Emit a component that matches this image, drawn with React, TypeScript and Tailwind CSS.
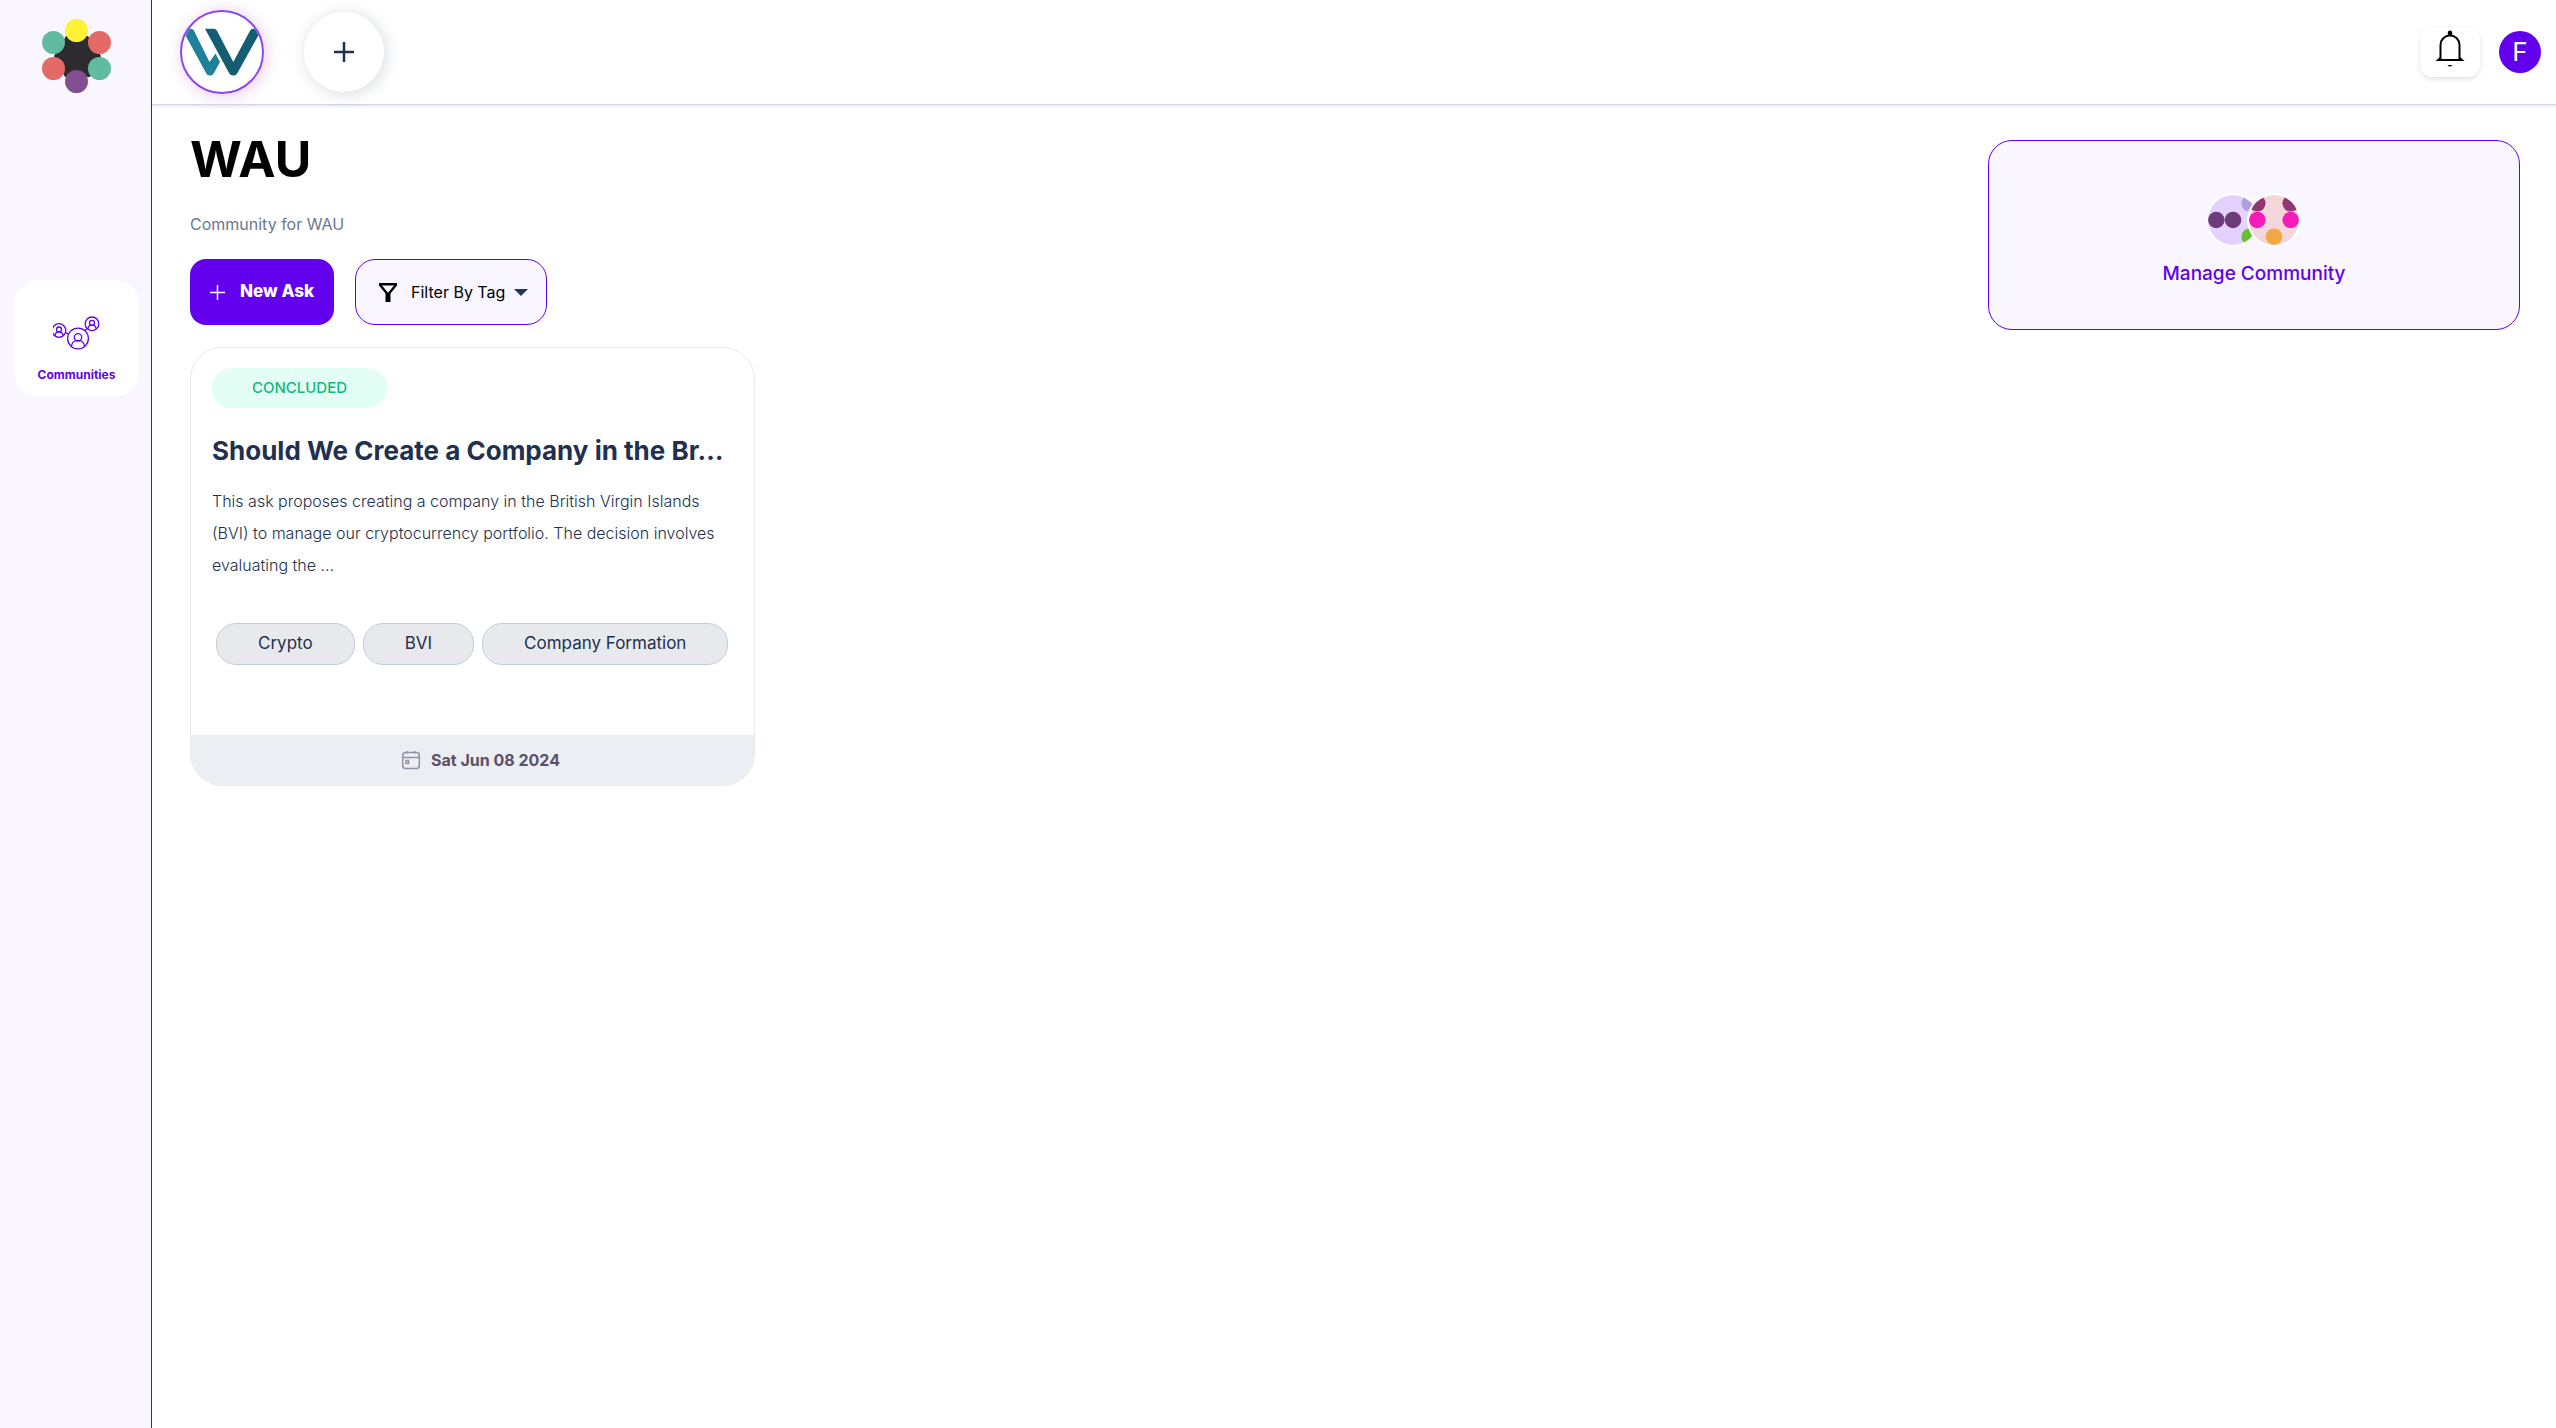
const tags = ['Crypto', 'BVI', 'Company Formation'];

function AppLogo() {
  return (
    <svg viewBox="0 0 70 75" className="h-[75px] w-[70px]" aria-hidden="true">
      <path d="M24 17h22l13 20-11 21H23L12 37z" fill="#2d2b30" />
      <circle cx="11.5" cy="23.5" r="11.5" fill="#61bba0" />
      <circle cx="57.5" cy="23.5" r="11.5" fill="#e46a67" />
      <circle cx="11.5" cy="49.5" r="11.5" fill="#e46a67" />
      <circle cx="57.5" cy="49.5" r="11.5" fill="#61bba0" />
      <circle cx="34.5" cy="11.5" r="11.5" fill="#fff135" />
      <circle cx="34.5" cy="62.5" r="11.5" fill="#834e90" />
    </svg>
  );
}

function CommunitiesIcon() {
  return (
    <svg viewBox="0 0 48 34" className="h-[34px] w-12" fill="none" stroke="#6200ee" strokeWidth="1.3" aria-hidden="true">
      <circle cx="25" cy="22.5" r="10.4" />
      <circle cx="25" cy="21.3" r="3.7" />
      <path d="M18.3 30.4c.6-4 3.2-6 6.7-6s6.1 2 6.7 6" />
      <circle cx="6" cy="14.5" r="6.8" />
      <circle cx="6" cy="13.5" r="2.5" />
      <path d="M1.8 19.7c.4-2.6 2-3.9 4.2-3.9s3.8 1.3 4.2 3.9" />
      <circle cx="39" cy="7.8" r="6.8" />
      <circle cx="39" cy="6.8" r="2.5" />
      <path d="M34.8 13c.4-2.6 2-3.9 4.2-3.9s3.8 1.3 4.2 3.9" />
      <path d="M12.5 16.8l3 1M32 14.500l2-1.800" />
    </svg>
  );
}

function WauLogo() {
  return (
    <svg viewBox="0 0 80 80" className="h-20 w-20 shrink-0" aria-hidden="true">
      <path d="M0 16.7h9q2 0 3 2L27.5 50l6-8.5L38 50l-5.5 10q-1.5 3.5-4.5 3.5T23.5 60L0 17z" fill="#1f8099" />
      <path d="M23 16.7h9q2 0 3 2L51.3 50 68 18.7q1-2 3-2h9L56 60q-1.5 3.5-4.7 3.5T46.5 60z" fill="#145d73" />
    </svg>
  );
}

function BellIcon() {
  return (
    <svg viewBox="0 0 30 38" className="h-[38px] w-[30px]" aria-hidden="true">
      <path d="M5.5 30V15a9.5 9.5 0 0 1 19 0v15" fill="none" stroke="#000" strokeWidth="2" />
      <path d="M12.8 6V2.5q0-2 2.2-2t2.200 2V6z" />
      <path d="M.5 31l4.5-4v2h20v-2l4.5 4z" />
      <path d="M12.5 35h5q-2.5 3-5 0z" />
    </svg>
  );
}

function FilterIcon() {
  return (
    <svg viewBox="0 0 18 19" className="h-[19px] w-[18px]" aria-hidden="true">
      <path fillRule="evenodd" d="M0 0h18v2.5l-6.5 8V19h-5v-8.5L0 2.5zM3 2.5l6 7.3 6-7.3z" />
    </svg>
  );
}

function CalendarIcon() {
  return (
    <svg viewBox="0 0 20 20" className="h-5 w-5" fill="none" stroke="#978fa3" strokeWidth="1.5" aria-hidden="true">
      <rect x="1.7" y="2.5" width="16.6" height="16" rx="3" />
      <path d="M1.7 7.5h16.6M6 1v2.5M14 1v2.5" />
      <rect x="5" y="10.5" width="2.5" height="3" />
    </svg>
  );
}

function Avatars() {
  return (
    <svg viewBox="0 0 96 54" className="h-[54px] w-24" aria-hidden="true">
      <defs>
        <clipPath id="left"><circle cx="27" cy="27" r="25" /></clipPath>
        <clipPath id="right"><circle cx="68" cy="27" r="25" /></clipPath>
      </defs>
      <circle cx="27" cy="27" r="27" fill="#fff" />
      <g clipPath="url(#left)">
        <rect width="54" height="54" fill="#e3d2ff" />
        <circle cx="10.3" cy="27" r="8.3" fill="#6d3b7a" />
        <circle cx="27" cy="27" r="8.3" fill="#6d3b7a" />
        <circle cx="43.7" cy="10.3" r="8.3" fill="#af9fe3" />
        <circle cx="43.7" cy="43.7" r="8.3" fill="#69bd36" />
      </g>
      <circle cx="68" cy="27" r="27" fill="#fff" />
      <g clipPath="url(#right)">
        <rect x="41" width="54" height="54" fill="#f3d7da" />
        <circle cx="51.3" cy="10.3" r="8.3" fill="#943674" />
        <circle cx="84.7" cy="10.3" r="8.3" fill="#943674" />
        <circle cx="51.3" cy="27" r="8.3" fill="#f81bb9" />
        <circle cx="84.7" cy="27" r="8.3" fill="#f81bb9" />
        <circle cx="68" cy="43.7" r="8.3" fill="#f3a745" />
      </g>
    </svg>
  );
}

export default function App() {
  return (
    <div className="flex min-h-screen bg-white font-[Inter,sans-serif] text-[#22304f]">
      {/* Sidebar */}
      <aside className="flex w-[152px] shrink-0 flex-col items-center border-r border-[#6200ee] bg-[#f9f6ff] pt-[19px] pl-0.5">
        <a href="#home" aria-label="Home">
          <AppLogo />
        </a>
        <nav className="mt-[186px]">
          <a
            href="#communities"
            className="flex h-[116px] w-[125px] flex-col items-center rounded-3xl bg-white pt-9"
          >
            <CommunitiesIcon />
            <span className="mt-[17px] text-xs leading-4 font-bold text-[#6200ee]">Communities</span>
          </a>
        </nav>
      </aside>

      <div className="flex min-w-0 flex-1 flex-col">
        {/* Top bar */}
        <header className="flex h-[105px] items-center justify-between border-b border-[#d8d7ea] pr-[15px] pl-7 shadow-[0_1px_3px_rgba(34,48,79,0.15)]">
          <div className="flex items-center gap-10">
            <button
              type="button"
              aria-label="WAU community"
              className="flex h-[84px] w-[84px] items-center justify-center overflow-hidden rounded-full border-2 border-[#8b45f2] shadow-[2px_2px_16px_rgba(160,40,160,0.25)]"
            >
              <WauLogo />
            </button>
            <button
              type="button"
              aria-label="Add community"
              className="flex h-20 w-20 items-center justify-center rounded-full bg-white shadow-[2px_2px_16px_rgba(34,48,79,0.18)]"
            >
              <svg viewBox="0 0 20 20" className="h-5 w-5" stroke="#22304f" strokeWidth="2.5" aria-hidden="true">
                <path d="M10 0v20M0 10h20" />
              </svg>
            </button>
          </div>
          <div className="flex items-center gap-[19px]">
            <button
              type="button"
              aria-label="Notifications"
              className="flex h-[50px] w-[60px] justify-center rounded-xl bg-white pt-[3px] shadow-[0_2px_4px_rgba(34,48,79,0.15)]"
            >
              <BellIcon />
            </button>
            <button
              type="button"
              aria-label="Account"
              className="h-[42px] w-[42px] rounded-full bg-[#6200ee] text-[26px] leading-[42px] text-white"
            >
              F
            </button>
          </div>
        </header>

        <main className="flex items-start justify-between gap-10 pt-[35px] pr-9 pl-[38px]">
          <div className="min-w-0 flex-1">
            <h1 className="text-[50px] leading-[38px] font-bold text-black">WAU</h1>
            <p className="mt-[34px] text-base leading-6 text-[#69788f]">Community for WAU</p>

            {/* Actions */}
            <div className="mt-[23px] flex gap-[21px]">
              <button
                type="button"
                className="flex h-[66px] items-center gap-[15px] rounded-2xl bg-[#6200ee] px-5 text-[17px] font-extrabold text-white"
              >
                <svg viewBox="0 0 15 15" className="h-[15px] w-[15px]" stroke="currentColor" strokeWidth="1.5" aria-hidden="true">
                  <path d="M7.5 0v15M0 7.5h15" />
                </svg>
                New Ask
              </button>
              <label className="flex h-[66px] items-center rounded-[20px] border border-[#6200ee] bg-[#f9f6ff] pr-[18px] pl-[23px] text-base text-black">
                <FilterIcon />
                <select aria-label="Filter By Tag" className="ml-[14px] appearance-none bg-transparent outline-none">
                  <option>Filter By Tag</option>
                </select>
                <svg viewBox="0 0 14 7" className="ml-2 h-[7px] w-[14px]" fill="#22375f" aria-hidden="true">
                  <path d="M0 0h14L7 7z" />
                </svg>
              </label>
            </div>

            {/* Ask card */}
            <article className="mt-[22px] w-full max-w-[565px] overflow-hidden rounded-[32px] border border-[#e7e9ed]">
              <div className="px-[21px] pt-5">
                <span className="inline-flex h-10 w-[175px] items-center justify-center rounded-[20px] bg-[#e3fff5] text-[15px] font-medium text-[#14b87c]">
                  CONCLUDED
                </span>
                <h2 className="mt-[23px] truncate text-[26px] leading-10 font-bold">
                  Should We Create a Company in the Br…
                </h2>
                <p className="mt-[14px] text-base leading-8 font-light">
                  This ask proposes creating a company in the British Virgin Islands (BVI) to manage our cryptocurrency
                  portfolio. The decision involves evaluating the ...
                </p>
                <ul className="mt-[42px] flex gap-2 px-1">
                  {tags.map((tag) => (
                    <li
                      key={tag}
                      className="flex h-[42px] items-center rounded-[20px] border border-[#c3ccd9] bg-[#e8e9ed] px-[41px] text-[17px] whitespace-nowrap"
                    >
                      {tag}
                    </li>
                  ))}
                </ul>
              </div>
              <footer className="mt-[70px] flex h-[50px] items-center justify-center gap-[10px] bg-[#ebeef3] pl-4 text-base font-bold text-[#5b5068]">
                <CalendarIcon />
                <time dateTime="2024-06-08">Sat Jun 08 2024</time>
              </footer>
            </article>
          </div>

          {/* Community management */}
          <a
            href="#manage"
            className="flex h-[190px] w-[532px] flex-col items-center rounded-3xl border border-[#6200ee] bg-[#f9f6ff] pt-[52px]"
          >
            <Avatars />
            <span className="mt-3 text-[19px] leading-[30px] font-medium text-[#6200ee]">Manage Community</span>
          </a>
        </main>
      </div>
    </div>
  );
}
